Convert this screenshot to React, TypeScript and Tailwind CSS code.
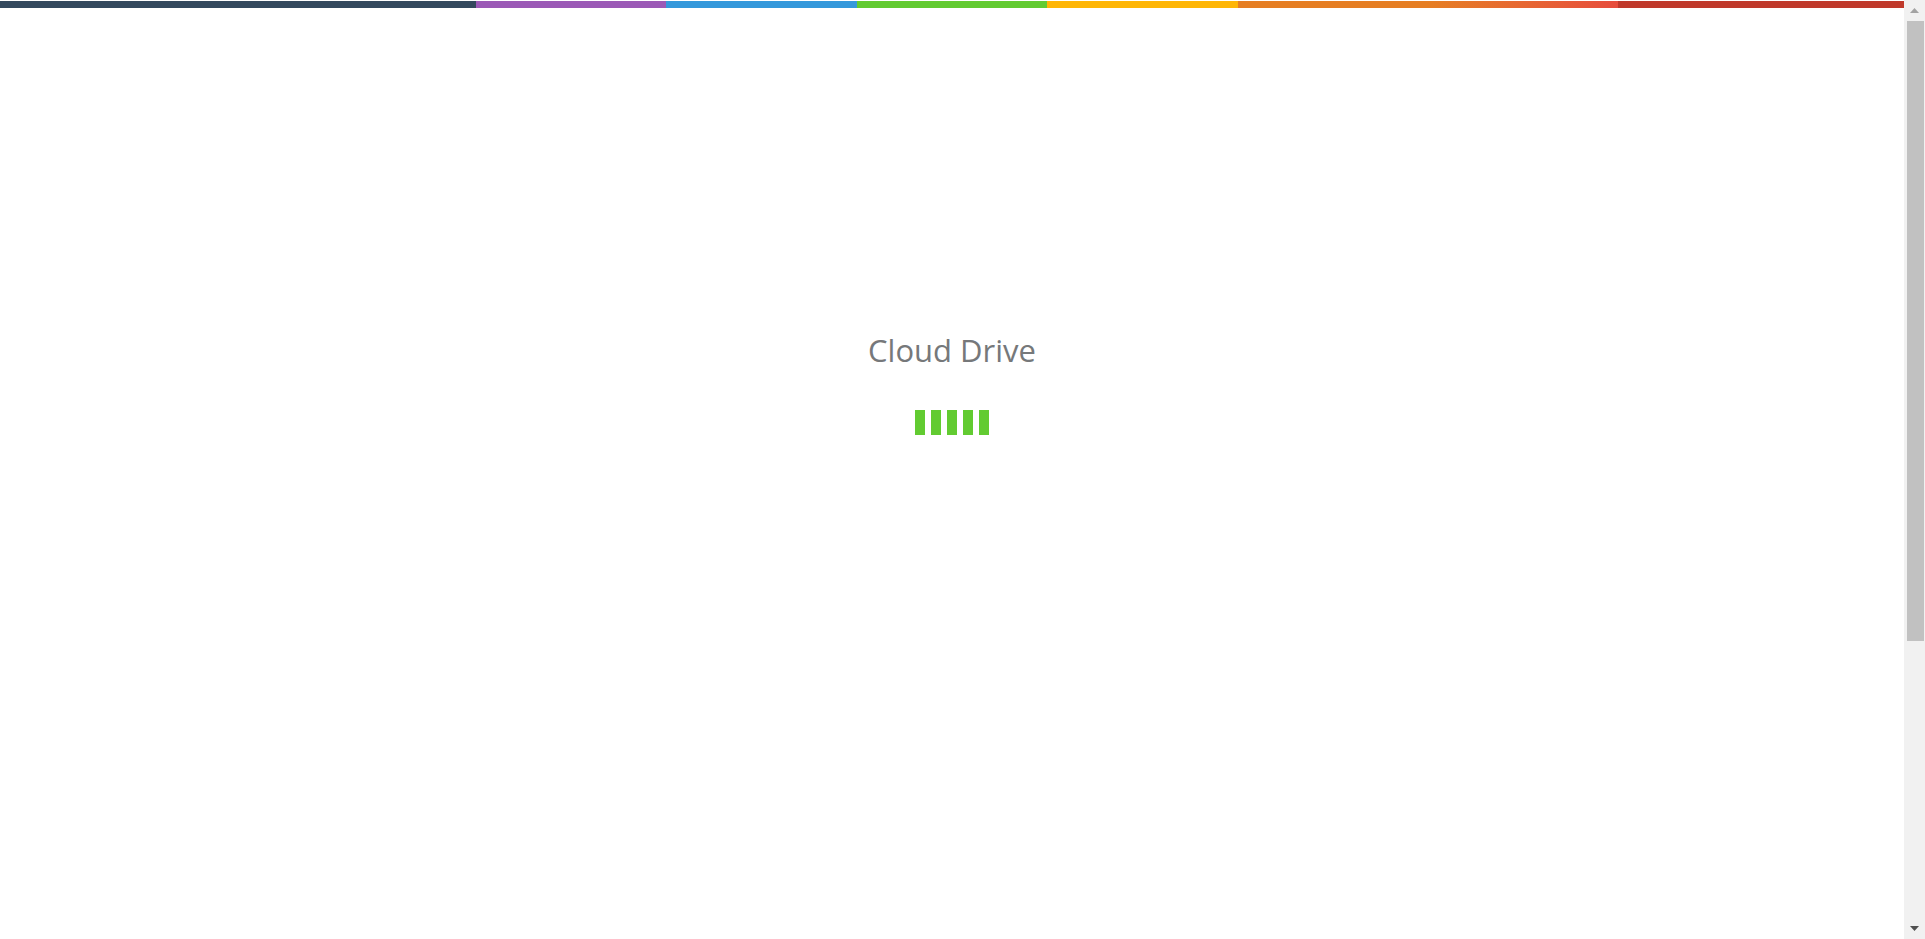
import React from "react";

export default function App() {
  const bars = [0, 1, 2, 3, 4];
  return (
    <div className="flex h-[939px] w-full overflow-hidden bg-white" style={{ fontFamily: '"Open Sans", "Liberation Sans", sans-serif' }}>
      <div className="flex min-w-0 flex-1 flex-col">
        <div className="mt-px flex h-[7px] w-full">
          <div className="h-full w-[25%] bg-[#34495e]" />
          <div className="h-full w-[10%] bg-[#9b59b6]" />
          <div className="h-full w-[10%] bg-[#3498db]" />
          <div className="h-full w-[10%] bg-[#62cb31]" />
          <div className="h-full w-[10%] bg-[#ffb606]" />
          <div className="h-full w-[10%] bg-[#e67e22]" />
          <div className="h-full w-[10%] bg-gradient-to-r from-[#e67e22] to-[#e74c3c]" />
          <div className="h-full w-[15%] bg-[#c0392b]" />
        </div>
        <div className="flex flex-col items-center">
          <h1 className="mt-[327px] text-[31px] leading-[31px] font-normal text-[#76787a]">Cloud Drive</h1>
          <div className="mt-[44px] flex gap-[6px]">
            {bars.map((b) => (
              <div key={b} className="h-[25px] w-[10px] bg-[#62cb31]" />
            ))}
          </div>
        </div>
      </div>
      <div className="flex h-full w-[21px] shrink-0 flex-col items-center bg-[#f1f1f1]">
        <div className="flex h-[21px] w-full items-center justify-center">
          <svg width="9" height="5" viewBox="0 0 9 5">
            <polygon points="4.5,0 9,5 0,5" fill="#a3a3a3" />
          </svg>
        </div>
        <div className="ml-[1px] h-[620px] w-[17px] bg-[#c1c1c1]" />
        <div className="flex-1" />
        <div className="flex h-[21px] w-full items-center justify-center">
          <svg width="9" height="5" viewBox="0 0 9 5">
            <polygon points="0,0 9,0 4.5,5" fill="#505050" />
          </svg>
        </div>
      </div>
    </div>
  );
}
